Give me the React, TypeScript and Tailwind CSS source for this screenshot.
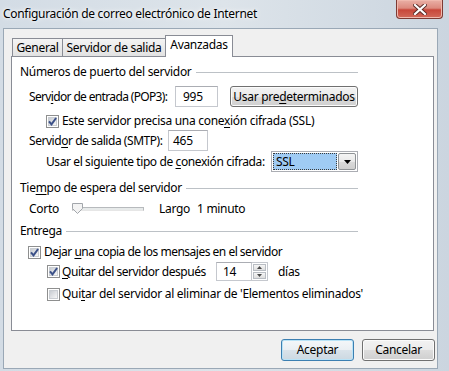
import React from "react";

const font = "font-['Noto_Sans',sans-serif] text-[12px] tracking-[-0.3px] text-black whitespace-nowrap";

function U({ children }: { children: React.ReactNode }) {
  return <span className="underline decoration-1 underline-offset-[2px]">{children}</span>;
}

function Checkbox({ checked }: { checked?: boolean }) {
  return (
    <span className="relative flex w-[13px] h-[13px] shrink-0 border border-[#8e8f8f] bg-white p-px">
      <span className="flex-1 border border-[#c9cdd2] bg-gradient-to-br from-[#c8ccd2] to-[#f7f7f7]" />
      {checked && (
        <svg className="absolute left-0 top-0" width="11" height="11" viewBox="0 0 11 11">
          <path d="M2 5.3 L4.5 8.4 L9.1 2" fill="none" stroke="#3b5088" strokeWidth="2" />
        </svg>
      )}
    </span>
  );
}

function Header({ children }: { children: React.ReactNode }) {
  return (
    <div className="flex items-center h-[16px]">
      <span>{children}</span>
      <span className="flex-1 h-px ml-[4px] bg-[#bcc1c6]" />
    </div>
  );
}

function Field({ value, w, pl }: { value: string; w: string; pl: string }) {
  return (
    <div
      className={`${w} ${pl} shrink-0 h-full flex items-center bg-white border border-[#c5c8ce] border-t-[#abadb3]`}
    >
      {value}
    </div>
  );
}

function Button({ children, primary, className }: { children: React.ReactNode; primary?: boolean; className: string }) {
  return (
    <div
      className={`${className} shrink-0 flex items-center justify-center rounded-[3px] border ${
        primary
          ? "border-[#3c7fb1] bg-[linear-gradient(#f4f7f9_0%,#eaeff3_50%,#dae3ea_50%,#ccd8e1_100%)] shadow-[inset_0_0_0_1px_#b9e3f7]"
          : "border-[#707070] bg-[linear-gradient(#f2f2f2_0%,#ebebeb_50%,#dddddd_50%,#cfcfcf_100%)] shadow-[inset_0_0_0_1px_#fbfbfb]"
      }`}
    >
      {children}
    </div>
  );
}

export default function App() {
  return (
    <div className={`${font} w-[449px] h-[371px] overflow-hidden bg-gradient-to-r from-[#d3dce5] via-[#dde4ea] to-[#cbd5df] flex flex-col`}>
      {/* title bar */}
      <div className="relative h-[28px] shrink-0">
        <div className="ml-[3px] pt-[6px] leading-[16px] [text-shadow:0_0_6px_#ffffff,0_0_3px_#ffffff]">
          Configuración de correo electrónico de Internet
        </div>
        <div className="absolute right-[6px] top-0 w-[47px] h-[19px] rounded-b-[4px] border border-t-0 border-[#7d3a33] bg-[linear-gradient(#eab0a6_0%,#dc8a7e_45%,#c8473a_55%,#d26a5a_100%)] shadow-[inset_0_0_0_1px_#f0b9ae] flex items-center justify-center">
          <svg width="14" height="11" viewBox="0 0 14 11">
            <path d="M2 1 L12 10 M12 1 L2 10" stroke="#5a2a25" strokeWidth="4" strokeLinecap="square" />
            <path d="M2 1 L12 10 M12 1 L2 10" stroke="#ffffff" strokeWidth="2.2" strokeLinecap="square" />
          </svg>
        </div>
      </div>

      {/* client area */}
      <div className="ml-[3px] w-[435px] h-[341px] border border-[#9aa8b6] bg-[#f0f0f0] pl-[7px] pr-[2px] pt-[6px] flex flex-col">
        {/* tabs */}
        <div className="flex items-end h-[21px] pl-px">
          <div className="w-[51px] h-[18px] border border-b-0 border-[#898c95] bg-gradient-to-b from-[#f4f4f4] to-[#e2e2e2] flex items-center justify-center">
            General
          </div>
          <div className="w-[103px] h-[18px] border border-l-0 border-b-0 border-[#898c95] bg-gradient-to-b from-[#f4f4f4] to-[#e2e2e2] flex items-center justify-center">
            Servidor de salida
          </div>
          <div className="relative z-10 -ml-px -mb-px w-[68px] h-[22px] border border-b-0 border-[#898c95] bg-white flex items-center justify-center pb-[3px]">
            Avanzadas
          </div>
        </div>

        {/* panel */}
        <div className="w-[423px] h-[275px] border border-[#898c95] bg-white pl-[8px]">
          <div className="w-[338px] flex flex-col">
            <div className="mt-[7px]">
              <Header>Números de puerto del servidor</Header>
            </div>

            <div className="mt-[6px] h-[21px] flex items-center pl-[9px]">
              <span className="w-[146px] shrink-0 tracking-[-0.65px]">
                Serv<U>i</U>dor de entrada (POP3):
              </span>
              <Field value="995" w="w-[43px]" pl="pl-[7px]" />
              <Button className="ml-[12px] w-[128px] h-[21px]">
                Usar pre<U>d</U>eterminados
              </Button>
            </div>

            <div className="mt-[6px] h-[16px] flex items-center pl-[26px]">
              <Checkbox checked />
              <span className="ml-[3px]">
                Este servidor precisa una cone<U>x</U>ión cifrada (SSL)
              </span>
            </div>

            <div className="mt-px h-[21px] flex items-center pl-[9px]">
              <span className="w-[139px] shrink-0 tracking-[-0.45px]">
                Servid<U>o</U>r de salida (SMTP):
              </span>
              <Field value="465" w="w-[40px]" pl="pl-[4px]" />
            </div>

            <div className="h-[21px] flex items-center pl-[26px]">
              <span className="w-[225px] shrink-0 tracking-[-0.4px]">
                Usar el siguiente tipo de <U>c</U>onexión cifrada:
              </span>
              <div className="w-[87px] h-[21px] shrink-0 flex border border-[#abadb3] bg-white p-px">
                <div className="flex-1 flex items-center pl-[2px] bg-[#9fcbf4] border border-dotted border-[#3a3a3a]">
                  SSL
                </div>
                <div className="w-[18px] ml-px flex items-center justify-center border border-[#8f9396] rounded-[2px] bg-[linear-gradient(#f4f4f4_0%,#e9e9e9_50%,#dadada_50%,#cfcfcf_100%)]">
                  <svg width="7" height="4" viewBox="0 0 7 4">
                    <path d="M0 0 H7 L3.5 4 Z" fill="#000" />
                  </svg>
                </div>
              </div>
            </div>

            <div className="mt-[8px]">
              <Header>
                Tie<U>m</U>po de espera del servidor
              </Header>
            </div>

            <div className="mt-[5px] h-[16px] flex items-center pl-[9px]">
              <span className="w-[43px] shrink-0">Corto</span>
              <div className="relative w-[72px] h-[16px] shrink-0 flex items-center">
                <div className="w-full h-[4px] border border-[#b7babd] border-b-[#e6e6e6] bg-[#e7eaea]" />
                <svg className="absolute left-0 top-[2px]" width="11" height="11" viewBox="0 0 11 11">
                  <path d="M0.5 0.5 H10.5 V5.5 L5.5 10.5 L0.5 5.5 Z" fill="#f3f3f3" stroke="#a2a6ab" />
                </svg>
              </div>
              <span className="ml-[15px] w-[38px] shrink-0">Largo</span>
              <span>1 minuto</span>
            </div>

            <div className="mt-[6px]">
              <Header>Entrega</Header>
            </div>

            <div className="mt-[5px] h-[16px] flex items-center pl-[8px]">
              <Checkbox checked />
              <span className="ml-[3px] tracking-[-0.5px]">
                Dejar <U>u</U>na copia de los mensajes en el servidor
              </span>
            </div>

            <div className="mt-[2px] h-[19px] flex items-center pl-[27px]">
              <Checkbox checked />
              <span className="ml-[2px] w-[154px] shrink-0 tracking-[-0.45px]">
                <U>Q</U>uitar del servidor después
              </span>
              <Field value="14" w="w-[36px]" pl="pl-[6px]" />
              <div className="w-[16px] h-full shrink-0 flex flex-col gap-px bg-white border border-[#c5c8ce] border-l-0 p-px">
                <div className="flex-1 flex items-center justify-center border border-[#b9bdc3] bg-gradient-to-b from-[#f6f6f6] to-[#dedede]">
                  <svg width="5" height="3" viewBox="0 0 5 3">
                    <path d="M0 3 H5 L2.5 0 Z" fill="#4a4a4a" />
                  </svg>
                </div>
                <div className="flex-1 flex items-center justify-center border border-[#b9bdc3] bg-gradient-to-b from-[#f6f6f6] to-[#dedede]">
                  <svg width="5" height="3" viewBox="0 0 5 3">
                    <path d="M0 0 H5 L2.5 3 Z" fill="#4a4a4a" />
                  </svg>
                </div>
              </div>
              <span className="ml-[10px]">días</span>
            </div>

            <div className="mt-[5px] h-[16px] flex items-center pl-[27px]">
              <Checkbox />
              <span className="ml-[2px]">
                Qui<U>t</U>ar del servidor al eliminar de 'Elementos eliminados'
              </span>
            </div>
          </div>
        </div>

        {/* buttons */}
        <div className="mt-[8px] flex justify-end gap-[8px]">
          <Button primary className="w-[73px] h-[22px]">
            Aceptar
          </Button>
          <Button className="w-[73px] h-[22px]">Cancelar</Button>
        </div>
      </div>
    </div>
  );
}
